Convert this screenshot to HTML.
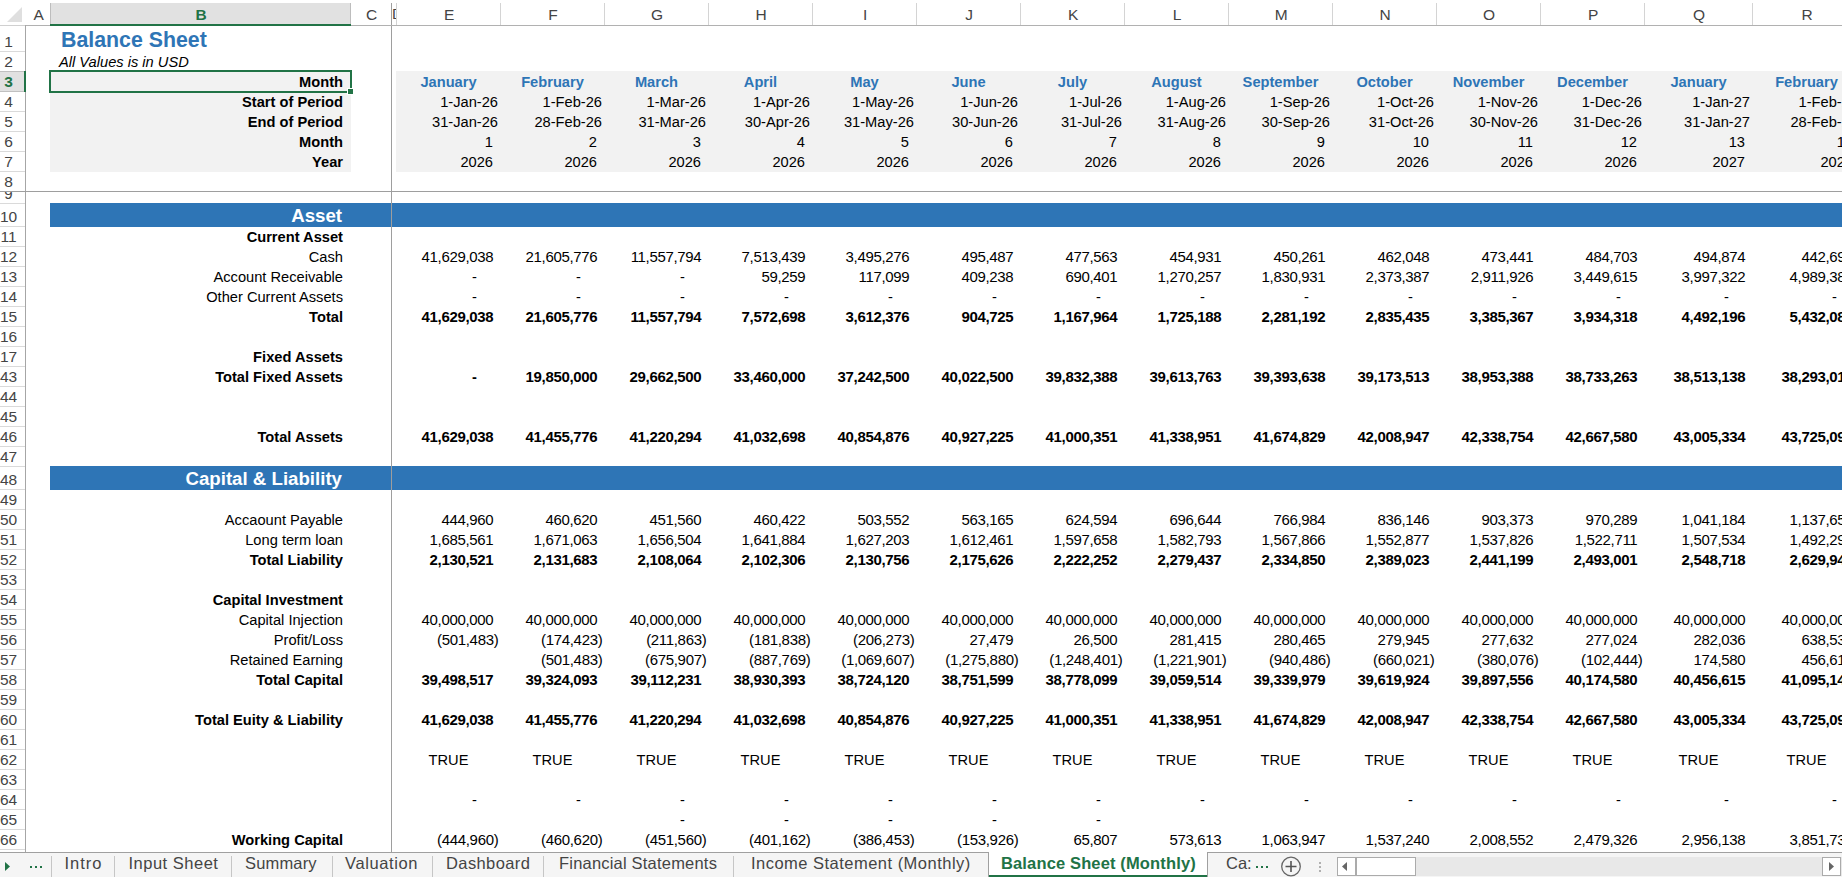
<!DOCTYPE html>
<html><head><meta charset="utf-8"><title>Balance Sheet (Monthly)</title>
<style>
html,body{margin:0;padding:0;}
body{width:1842px;height:877px;overflow:hidden;position:relative;background:#fff;font-family:"Liberation Sans",sans-serif;color:#000;}
.t{position:absolute;white-space:nowrap;line-height:40px;height:40px;}
.r{position:absolute;}
</style></head><body>
<div class="r" style="left:50px;top:71px;width:301px;height:101px;background:#f2f2f2;"></div><div class="r" style="left:396px;top:71px;width:1446px;height:101px;background:#f2f2f2;"></div><div class="r" style="left:50px;top:203px;width:1792px;height:24px;background:#2e75b6;"></div><div class="r" style="left:50px;top:466px;width:1792px;height:24px;background:#2e75b6;"></div><div class="t" style="left:61.00px;top:19.61px;width:400px;text-align:left;font-size:21.33px;font-weight:bold;color:#2e75b6;">Balance Sheet</div><div class="t" style="left:59.00px;top:41.92px;width:400px;text-align:left;font-size:14.67px;font-style:italic;">All Values is in USD</div><div class="t" style="left:-57.00px;top:61.92px;width:400px;text-align:right;font-size:14.67px;font-weight:bold;">Month</div><div class="t" style="left:-57.00px;top:81.92px;width:400px;text-align:right;font-size:14.67px;font-weight:bold;">Start of Period</div><div class="t" style="left:-57.00px;top:101.92px;width:400px;text-align:right;font-size:14.67px;font-weight:bold;">End of Period</div><div class="t" style="left:-57.00px;top:121.92px;width:400px;text-align:right;font-size:14.67px;font-weight:bold;">Month</div><div class="t" style="left:-57.00px;top:141.92px;width:400px;text-align:right;font-size:14.67px;font-weight:bold;">Year</div><div class="t" style="left:248.50px;top:61.92px;width:400px;text-align:center;font-size:14.67px;font-weight:bold;color:#2e75b6;">January</div><div class="t" style="left:98.00px;top:81.92px;width:400px;text-align:right;font-size:14.67px;">1-Jan-26</div><div class="t" style="left:98.00px;top:101.92px;width:400px;text-align:right;font-size:14.67px;">31-Jan-26</div><div class="t" style="left:93.00px;top:121.92px;width:400px;text-align:right;font-size:14.67px;">1</div><div class="t" style="left:93.00px;top:141.92px;width:400px;text-align:right;font-size:14.67px;">2026</div><div class="t" style="left:352.50px;top:61.92px;width:400px;text-align:center;font-size:14.67px;font-weight:bold;color:#2e75b6;">February</div><div class="t" style="left:202.00px;top:81.92px;width:400px;text-align:right;font-size:14.67px;">1-Feb-26</div><div class="t" style="left:202.00px;top:101.92px;width:400px;text-align:right;font-size:14.67px;">28-Feb-26</div><div class="t" style="left:197.00px;top:121.92px;width:400px;text-align:right;font-size:14.67px;">2</div><div class="t" style="left:197.00px;top:141.92px;width:400px;text-align:right;font-size:14.67px;">2026</div><div class="t" style="left:456.50px;top:61.92px;width:400px;text-align:center;font-size:14.67px;font-weight:bold;color:#2e75b6;">March</div><div class="t" style="left:306.00px;top:81.92px;width:400px;text-align:right;font-size:14.67px;">1-Mar-26</div><div class="t" style="left:306.00px;top:101.92px;width:400px;text-align:right;font-size:14.67px;">31-Mar-26</div><div class="t" style="left:301.00px;top:121.92px;width:400px;text-align:right;font-size:14.67px;">3</div><div class="t" style="left:301.00px;top:141.92px;width:400px;text-align:right;font-size:14.67px;">2026</div><div class="t" style="left:560.50px;top:61.92px;width:400px;text-align:center;font-size:14.67px;font-weight:bold;color:#2e75b6;">April</div><div class="t" style="left:410.00px;top:81.92px;width:400px;text-align:right;font-size:14.67px;">1-Apr-26</div><div class="t" style="left:410.00px;top:101.92px;width:400px;text-align:right;font-size:14.67px;">30-Apr-26</div><div class="t" style="left:405.00px;top:121.92px;width:400px;text-align:right;font-size:14.67px;">4</div><div class="t" style="left:405.00px;top:141.92px;width:400px;text-align:right;font-size:14.67px;">2026</div><div class="t" style="left:664.50px;top:61.92px;width:400px;text-align:center;font-size:14.67px;font-weight:bold;color:#2e75b6;">May</div><div class="t" style="left:514.00px;top:81.92px;width:400px;text-align:right;font-size:14.67px;">1-May-26</div><div class="t" style="left:514.00px;top:101.92px;width:400px;text-align:right;font-size:14.67px;">31-May-26</div><div class="t" style="left:509.00px;top:121.92px;width:400px;text-align:right;font-size:14.67px;">5</div><div class="t" style="left:509.00px;top:141.92px;width:400px;text-align:right;font-size:14.67px;">2026</div><div class="t" style="left:768.50px;top:61.92px;width:400px;text-align:center;font-size:14.67px;font-weight:bold;color:#2e75b6;">June</div><div class="t" style="left:618.00px;top:81.92px;width:400px;text-align:right;font-size:14.67px;">1-Jun-26</div><div class="t" style="left:618.00px;top:101.92px;width:400px;text-align:right;font-size:14.67px;">30-Jun-26</div><div class="t" style="left:613.00px;top:121.92px;width:400px;text-align:right;font-size:14.67px;">6</div><div class="t" style="left:613.00px;top:141.92px;width:400px;text-align:right;font-size:14.67px;">2026</div><div class="t" style="left:872.50px;top:61.92px;width:400px;text-align:center;font-size:14.67px;font-weight:bold;color:#2e75b6;">July</div><div class="t" style="left:722.00px;top:81.92px;width:400px;text-align:right;font-size:14.67px;">1-Jul-26</div><div class="t" style="left:722.00px;top:101.92px;width:400px;text-align:right;font-size:14.67px;">31-Jul-26</div><div class="t" style="left:717.00px;top:121.92px;width:400px;text-align:right;font-size:14.67px;">7</div><div class="t" style="left:717.00px;top:141.92px;width:400px;text-align:right;font-size:14.67px;">2026</div><div class="t" style="left:976.50px;top:61.92px;width:400px;text-align:center;font-size:14.67px;font-weight:bold;color:#2e75b6;">August</div><div class="t" style="left:826.00px;top:81.92px;width:400px;text-align:right;font-size:14.67px;">1-Aug-26</div><div class="t" style="left:826.00px;top:101.92px;width:400px;text-align:right;font-size:14.67px;">31-Aug-26</div><div class="t" style="left:821.00px;top:121.92px;width:400px;text-align:right;font-size:14.67px;">8</div><div class="t" style="left:821.00px;top:141.92px;width:400px;text-align:right;font-size:14.67px;">2026</div><div class="t" style="left:1080.50px;top:61.92px;width:400px;text-align:center;font-size:14.67px;font-weight:bold;color:#2e75b6;">September</div><div class="t" style="left:930.00px;top:81.92px;width:400px;text-align:right;font-size:14.67px;">1-Sep-26</div><div class="t" style="left:930.00px;top:101.92px;width:400px;text-align:right;font-size:14.67px;">30-Sep-26</div><div class="t" style="left:925.00px;top:121.92px;width:400px;text-align:right;font-size:14.67px;">9</div><div class="t" style="left:925.00px;top:141.92px;width:400px;text-align:right;font-size:14.67px;">2026</div><div class="t" style="left:1184.50px;top:61.92px;width:400px;text-align:center;font-size:14.67px;font-weight:bold;color:#2e75b6;">October</div><div class="t" style="left:1034.00px;top:81.92px;width:400px;text-align:right;font-size:14.67px;">1-Oct-26</div><div class="t" style="left:1034.00px;top:101.92px;width:400px;text-align:right;font-size:14.67px;">31-Oct-26</div><div class="t" style="left:1029.00px;top:121.92px;width:400px;text-align:right;font-size:14.67px;">10</div><div class="t" style="left:1029.00px;top:141.92px;width:400px;text-align:right;font-size:14.67px;">2026</div><div class="t" style="left:1288.50px;top:61.92px;width:400px;text-align:center;font-size:14.67px;font-weight:bold;color:#2e75b6;">November</div><div class="t" style="left:1138.00px;top:81.92px;width:400px;text-align:right;font-size:14.67px;">1-Nov-26</div><div class="t" style="left:1138.00px;top:101.92px;width:400px;text-align:right;font-size:14.67px;">30-Nov-26</div><div class="t" style="left:1133.00px;top:121.92px;width:400px;text-align:right;font-size:14.67px;">11</div><div class="t" style="left:1133.00px;top:141.92px;width:400px;text-align:right;font-size:14.67px;">2026</div><div class="t" style="left:1392.50px;top:61.92px;width:400px;text-align:center;font-size:14.67px;font-weight:bold;color:#2e75b6;">December</div><div class="t" style="left:1242.00px;top:81.92px;width:400px;text-align:right;font-size:14.67px;">1-Dec-26</div><div class="t" style="left:1242.00px;top:101.92px;width:400px;text-align:right;font-size:14.67px;">31-Dec-26</div><div class="t" style="left:1237.00px;top:121.92px;width:400px;text-align:right;font-size:14.67px;">12</div><div class="t" style="left:1237.00px;top:141.92px;width:400px;text-align:right;font-size:14.67px;">2026</div><div class="t" style="left:1498.50px;top:61.92px;width:400px;text-align:center;font-size:14.67px;font-weight:bold;color:#2e75b6;">January</div><div class="t" style="left:1350.00px;top:81.92px;width:400px;text-align:right;font-size:14.67px;">1-Jan-27</div><div class="t" style="left:1350.00px;top:101.92px;width:400px;text-align:right;font-size:14.67px;">31-Jan-27</div><div class="t" style="left:1345.00px;top:121.92px;width:400px;text-align:right;font-size:14.67px;">13</div><div class="t" style="left:1345.00px;top:141.92px;width:400px;text-align:right;font-size:14.67px;">2027</div><div class="t" style="left:1606.50px;top:61.92px;width:400px;text-align:center;font-size:14.67px;font-weight:bold;color:#2e75b6;">February</div><div class="t" style="left:1458.00px;top:81.92px;width:400px;text-align:right;font-size:14.67px;">1-Feb-27</div><div class="t" style="left:1458.00px;top:101.92px;width:400px;text-align:right;font-size:14.67px;">28-Feb-27</div><div class="t" style="left:1453.00px;top:121.92px;width:400px;text-align:right;font-size:14.67px;">14</div><div class="t" style="left:1453.00px;top:141.92px;width:400px;text-align:right;font-size:14.67px;">2027</div><div class="t" style="left:-58.00px;top:195.53px;width:400px;text-align:right;font-size:18.67px;font-weight:bold;color:#fff;">Asset</div><div class="t" style="left:-58.00px;top:458.53px;width:400px;text-align:right;font-size:18.67px;font-weight:bold;color:#fff;">Capital &amp; Liability</div><div class="t" style="left:-57.00px;top:216.92px;width:400px;text-align:right;font-size:14.67px;font-weight:bold;">Current Asset</div><div class="t" style="left:-57.00px;top:236.92px;width:400px;text-align:right;font-size:14.67px;">Cash</div><div class="t" style="left:-57.00px;top:256.92px;width:400px;text-align:right;font-size:14.67px;">Account Receivable</div><div class="t" style="left:-57.00px;top:276.92px;width:400px;text-align:right;font-size:14.67px;">Other Current Assets</div><div class="t" style="left:-57.00px;top:296.92px;width:400px;text-align:right;font-size:14.67px;font-weight:bold;">Total</div><div class="t" style="left:-57.00px;top:336.92px;width:400px;text-align:right;font-size:14.67px;font-weight:bold;">Fixed Assets</div><div class="t" style="left:-57.00px;top:356.92px;width:400px;text-align:right;font-size:14.67px;font-weight:bold;">Total Fixed Assets</div><div class="t" style="left:-57.00px;top:416.92px;width:400px;text-align:right;font-size:14.67px;font-weight:bold;">Total Assets</div><div class="t" style="left:-57.00px;top:499.92px;width:400px;text-align:right;font-size:14.67px;">Accaount Payable</div><div class="t" style="left:-57.00px;top:519.92px;width:400px;text-align:right;font-size:14.67px;">Long term loan</div><div class="t" style="left:-57.00px;top:539.92px;width:400px;text-align:right;font-size:14.67px;font-weight:bold;">Total Liability</div><div class="t" style="left:-57.00px;top:579.92px;width:400px;text-align:right;font-size:14.67px;font-weight:bold;">Capital Investment</div><div class="t" style="left:-57.00px;top:599.92px;width:400px;text-align:right;font-size:14.67px;">Capital Injection</div><div class="t" style="left:-57.00px;top:619.92px;width:400px;text-align:right;font-size:14.67px;">Profit/Loss</div><div class="t" style="left:-57.00px;top:639.92px;width:400px;text-align:right;font-size:14.67px;">Retained Earning</div><div class="t" style="left:-57.00px;top:659.92px;width:400px;text-align:right;font-size:14.67px;font-weight:bold;">Total Capital</div><div class="t" style="left:-57.00px;top:699.92px;width:400px;text-align:right;font-size:14.67px;font-weight:bold;">Total Euity &amp; Liability</div><div class="t" style="left:-57.00px;top:819.92px;width:400px;text-align:right;font-size:14.67px;font-weight:bold;">Working Capital</div><div class="t" style="left:93.33px;top:236.80px;width:400px;text-align:right;font-size:15px;letter-spacing:-0.33px;">41,629,038</div><div class="t" style="left:197.33px;top:236.80px;width:400px;text-align:right;font-size:15px;letter-spacing:-0.33px;">21,605,776</div><div class="t" style="left:301.33px;top:236.80px;width:400px;text-align:right;font-size:15px;letter-spacing:-0.33px;">11,557,794</div><div class="t" style="left:405.33px;top:236.80px;width:400px;text-align:right;font-size:15px;letter-spacing:-0.33px;">7,513,439</div><div class="t" style="left:509.33px;top:236.80px;width:400px;text-align:right;font-size:15px;letter-spacing:-0.33px;">3,495,276</div><div class="t" style="left:613.33px;top:236.80px;width:400px;text-align:right;font-size:15px;letter-spacing:-0.33px;">495,487</div><div class="t" style="left:717.33px;top:236.80px;width:400px;text-align:right;font-size:15px;letter-spacing:-0.33px;">477,563</div><div class="t" style="left:821.33px;top:236.80px;width:400px;text-align:right;font-size:15px;letter-spacing:-0.33px;">454,931</div><div class="t" style="left:925.33px;top:236.80px;width:400px;text-align:right;font-size:15px;letter-spacing:-0.33px;">450,261</div><div class="t" style="left:1029.33px;top:236.80px;width:400px;text-align:right;font-size:15px;letter-spacing:-0.33px;">462,048</div><div class="t" style="left:1133.33px;top:236.80px;width:400px;text-align:right;font-size:15px;letter-spacing:-0.33px;">473,441</div><div class="t" style="left:1237.33px;top:236.80px;width:400px;text-align:right;font-size:15px;letter-spacing:-0.33px;">484,703</div><div class="t" style="left:1345.33px;top:236.80px;width:400px;text-align:right;font-size:15px;letter-spacing:-0.33px;">494,874</div><div class="t" style="left:1453.33px;top:236.80px;width:400px;text-align:right;font-size:15px;letter-spacing:-0.33px;">442,693</div><div class="t" style="left:76.80px;top:257.42px;width:400px;text-align:right;font-size:14.67px;">-</div><div class="t" style="left:180.80px;top:257.42px;width:400px;text-align:right;font-size:14.67px;">-</div><div class="t" style="left:284.80px;top:257.42px;width:400px;text-align:right;font-size:14.67px;">-</div><div class="t" style="left:405.33px;top:256.80px;width:400px;text-align:right;font-size:15px;letter-spacing:-0.33px;">59,259</div><div class="t" style="left:509.33px;top:256.80px;width:400px;text-align:right;font-size:15px;letter-spacing:-0.33px;">117,099</div><div class="t" style="left:613.33px;top:256.80px;width:400px;text-align:right;font-size:15px;letter-spacing:-0.33px;">409,238</div><div class="t" style="left:717.33px;top:256.80px;width:400px;text-align:right;font-size:15px;letter-spacing:-0.33px;">690,401</div><div class="t" style="left:821.33px;top:256.80px;width:400px;text-align:right;font-size:15px;letter-spacing:-0.33px;">1,270,257</div><div class="t" style="left:925.33px;top:256.80px;width:400px;text-align:right;font-size:15px;letter-spacing:-0.33px;">1,830,931</div><div class="t" style="left:1029.33px;top:256.80px;width:400px;text-align:right;font-size:15px;letter-spacing:-0.33px;">2,373,387</div><div class="t" style="left:1133.33px;top:256.80px;width:400px;text-align:right;font-size:15px;letter-spacing:-0.33px;">2,911,926</div><div class="t" style="left:1237.33px;top:256.80px;width:400px;text-align:right;font-size:15px;letter-spacing:-0.33px;">3,449,615</div><div class="t" style="left:1345.33px;top:256.80px;width:400px;text-align:right;font-size:15px;letter-spacing:-0.33px;">3,997,322</div><div class="t" style="left:1453.33px;top:256.80px;width:400px;text-align:right;font-size:15px;letter-spacing:-0.33px;">4,989,389</div><div class="t" style="left:76.80px;top:277.42px;width:400px;text-align:right;font-size:14.67px;">-</div><div class="t" style="left:180.80px;top:277.42px;width:400px;text-align:right;font-size:14.67px;">-</div><div class="t" style="left:284.80px;top:277.42px;width:400px;text-align:right;font-size:14.67px;">-</div><div class="t" style="left:388.80px;top:277.42px;width:400px;text-align:right;font-size:14.67px;">-</div><div class="t" style="left:492.80px;top:277.42px;width:400px;text-align:right;font-size:14.67px;">-</div><div class="t" style="left:596.80px;top:277.42px;width:400px;text-align:right;font-size:14.67px;">-</div><div class="t" style="left:700.80px;top:277.42px;width:400px;text-align:right;font-size:14.67px;">-</div><div class="t" style="left:804.80px;top:277.42px;width:400px;text-align:right;font-size:14.67px;">-</div><div class="t" style="left:908.80px;top:277.42px;width:400px;text-align:right;font-size:14.67px;">-</div><div class="t" style="left:1012.80px;top:277.42px;width:400px;text-align:right;font-size:14.67px;">-</div><div class="t" style="left:1116.80px;top:277.42px;width:400px;text-align:right;font-size:14.67px;">-</div><div class="t" style="left:1220.80px;top:277.42px;width:400px;text-align:right;font-size:14.67px;">-</div><div class="t" style="left:1328.80px;top:277.42px;width:400px;text-align:right;font-size:14.67px;">-</div><div class="t" style="left:1436.80px;top:277.42px;width:400px;text-align:right;font-size:14.67px;">-</div><div class="t" style="left:93.33px;top:296.80px;width:400px;text-align:right;font-size:15px;font-weight:bold;letter-spacing:-0.33px;">41,629,038</div><div class="t" style="left:197.33px;top:296.80px;width:400px;text-align:right;font-size:15px;font-weight:bold;letter-spacing:-0.33px;">21,605,776</div><div class="t" style="left:301.33px;top:296.80px;width:400px;text-align:right;font-size:15px;font-weight:bold;letter-spacing:-0.33px;">11,557,794</div><div class="t" style="left:405.33px;top:296.80px;width:400px;text-align:right;font-size:15px;font-weight:bold;letter-spacing:-0.33px;">7,572,698</div><div class="t" style="left:509.33px;top:296.80px;width:400px;text-align:right;font-size:15px;font-weight:bold;letter-spacing:-0.33px;">3,612,376</div><div class="t" style="left:613.33px;top:296.80px;width:400px;text-align:right;font-size:15px;font-weight:bold;letter-spacing:-0.33px;">904,725</div><div class="t" style="left:717.33px;top:296.80px;width:400px;text-align:right;font-size:15px;font-weight:bold;letter-spacing:-0.33px;">1,167,964</div><div class="t" style="left:821.33px;top:296.80px;width:400px;text-align:right;font-size:15px;font-weight:bold;letter-spacing:-0.33px;">1,725,188</div><div class="t" style="left:925.33px;top:296.80px;width:400px;text-align:right;font-size:15px;font-weight:bold;letter-spacing:-0.33px;">2,281,192</div><div class="t" style="left:1029.33px;top:296.80px;width:400px;text-align:right;font-size:15px;font-weight:bold;letter-spacing:-0.33px;">2,835,435</div><div class="t" style="left:1133.33px;top:296.80px;width:400px;text-align:right;font-size:15px;font-weight:bold;letter-spacing:-0.33px;">3,385,367</div><div class="t" style="left:1237.33px;top:296.80px;width:400px;text-align:right;font-size:15px;font-weight:bold;letter-spacing:-0.33px;">3,934,318</div><div class="t" style="left:1345.33px;top:296.80px;width:400px;text-align:right;font-size:15px;font-weight:bold;letter-spacing:-0.33px;">4,492,196</div><div class="t" style="left:1453.33px;top:296.80px;width:400px;text-align:right;font-size:15px;font-weight:bold;letter-spacing:-0.33px;">5,432,082</div><div class="t" style="left:76.80px;top:357.42px;width:400px;text-align:right;font-size:14.67px;font-weight:bold;">-</div><div class="t" style="left:197.33px;top:356.80px;width:400px;text-align:right;font-size:15px;font-weight:bold;letter-spacing:-0.33px;">19,850,000</div><div class="t" style="left:301.33px;top:356.80px;width:400px;text-align:right;font-size:15px;font-weight:bold;letter-spacing:-0.33px;">29,662,500</div><div class="t" style="left:405.33px;top:356.80px;width:400px;text-align:right;font-size:15px;font-weight:bold;letter-spacing:-0.33px;">33,460,000</div><div class="t" style="left:509.33px;top:356.80px;width:400px;text-align:right;font-size:15px;font-weight:bold;letter-spacing:-0.33px;">37,242,500</div><div class="t" style="left:613.33px;top:356.80px;width:400px;text-align:right;font-size:15px;font-weight:bold;letter-spacing:-0.33px;">40,022,500</div><div class="t" style="left:717.33px;top:356.80px;width:400px;text-align:right;font-size:15px;font-weight:bold;letter-spacing:-0.33px;">39,832,388</div><div class="t" style="left:821.33px;top:356.80px;width:400px;text-align:right;font-size:15px;font-weight:bold;letter-spacing:-0.33px;">39,613,763</div><div class="t" style="left:925.33px;top:356.80px;width:400px;text-align:right;font-size:15px;font-weight:bold;letter-spacing:-0.33px;">39,393,638</div><div class="t" style="left:1029.33px;top:356.80px;width:400px;text-align:right;font-size:15px;font-weight:bold;letter-spacing:-0.33px;">39,173,513</div><div class="t" style="left:1133.33px;top:356.80px;width:400px;text-align:right;font-size:15px;font-weight:bold;letter-spacing:-0.33px;">38,953,388</div><div class="t" style="left:1237.33px;top:356.80px;width:400px;text-align:right;font-size:15px;font-weight:bold;letter-spacing:-0.33px;">38,733,263</div><div class="t" style="left:1345.33px;top:356.80px;width:400px;text-align:right;font-size:15px;font-weight:bold;letter-spacing:-0.33px;">38,513,138</div><div class="t" style="left:1453.33px;top:356.80px;width:400px;text-align:right;font-size:15px;font-weight:bold;letter-spacing:-0.33px;">38,293,013</div><div class="t" style="left:93.33px;top:416.80px;width:400px;text-align:right;font-size:15px;font-weight:bold;letter-spacing:-0.33px;">41,629,038</div><div class="t" style="left:197.33px;top:416.80px;width:400px;text-align:right;font-size:15px;font-weight:bold;letter-spacing:-0.33px;">41,455,776</div><div class="t" style="left:301.33px;top:416.80px;width:400px;text-align:right;font-size:15px;font-weight:bold;letter-spacing:-0.33px;">41,220,294</div><div class="t" style="left:405.33px;top:416.80px;width:400px;text-align:right;font-size:15px;font-weight:bold;letter-spacing:-0.33px;">41,032,698</div><div class="t" style="left:509.33px;top:416.80px;width:400px;text-align:right;font-size:15px;font-weight:bold;letter-spacing:-0.33px;">40,854,876</div><div class="t" style="left:613.33px;top:416.80px;width:400px;text-align:right;font-size:15px;font-weight:bold;letter-spacing:-0.33px;">40,927,225</div><div class="t" style="left:717.33px;top:416.80px;width:400px;text-align:right;font-size:15px;font-weight:bold;letter-spacing:-0.33px;">41,000,351</div><div class="t" style="left:821.33px;top:416.80px;width:400px;text-align:right;font-size:15px;font-weight:bold;letter-spacing:-0.33px;">41,338,951</div><div class="t" style="left:925.33px;top:416.80px;width:400px;text-align:right;font-size:15px;font-weight:bold;letter-spacing:-0.33px;">41,674,829</div><div class="t" style="left:1029.33px;top:416.80px;width:400px;text-align:right;font-size:15px;font-weight:bold;letter-spacing:-0.33px;">42,008,947</div><div class="t" style="left:1133.33px;top:416.80px;width:400px;text-align:right;font-size:15px;font-weight:bold;letter-spacing:-0.33px;">42,338,754</div><div class="t" style="left:1237.33px;top:416.80px;width:400px;text-align:right;font-size:15px;font-weight:bold;letter-spacing:-0.33px;">42,667,580</div><div class="t" style="left:1345.33px;top:416.80px;width:400px;text-align:right;font-size:15px;font-weight:bold;letter-spacing:-0.33px;">43,005,334</div><div class="t" style="left:1453.33px;top:416.80px;width:400px;text-align:right;font-size:15px;font-weight:bold;letter-spacing:-0.33px;">43,725,095</div><div class="t" style="left:93.33px;top:499.80px;width:400px;text-align:right;font-size:15px;letter-spacing:-0.33px;">444,960</div><div class="t" style="left:197.33px;top:499.80px;width:400px;text-align:right;font-size:15px;letter-spacing:-0.33px;">460,620</div><div class="t" style="left:301.33px;top:499.80px;width:400px;text-align:right;font-size:15px;letter-spacing:-0.33px;">451,560</div><div class="t" style="left:405.33px;top:499.80px;width:400px;text-align:right;font-size:15px;letter-spacing:-0.33px;">460,422</div><div class="t" style="left:509.33px;top:499.80px;width:400px;text-align:right;font-size:15px;letter-spacing:-0.33px;">503,552</div><div class="t" style="left:613.33px;top:499.80px;width:400px;text-align:right;font-size:15px;letter-spacing:-0.33px;">563,165</div><div class="t" style="left:717.33px;top:499.80px;width:400px;text-align:right;font-size:15px;letter-spacing:-0.33px;">624,594</div><div class="t" style="left:821.33px;top:499.80px;width:400px;text-align:right;font-size:15px;letter-spacing:-0.33px;">696,644</div><div class="t" style="left:925.33px;top:499.80px;width:400px;text-align:right;font-size:15px;letter-spacing:-0.33px;">766,984</div><div class="t" style="left:1029.33px;top:499.80px;width:400px;text-align:right;font-size:15px;letter-spacing:-0.33px;">836,146</div><div class="t" style="left:1133.33px;top:499.80px;width:400px;text-align:right;font-size:15px;letter-spacing:-0.33px;">903,373</div><div class="t" style="left:1237.33px;top:499.80px;width:400px;text-align:right;font-size:15px;letter-spacing:-0.33px;">970,289</div><div class="t" style="left:1345.33px;top:499.80px;width:400px;text-align:right;font-size:15px;letter-spacing:-0.33px;">1,041,184</div><div class="t" style="left:1453.33px;top:499.80px;width:400px;text-align:right;font-size:15px;letter-spacing:-0.33px;">1,137,658</div><div class="t" style="left:93.33px;top:519.80px;width:400px;text-align:right;font-size:15px;letter-spacing:-0.33px;">1,685,561</div><div class="t" style="left:197.33px;top:519.80px;width:400px;text-align:right;font-size:15px;letter-spacing:-0.33px;">1,671,063</div><div class="t" style="left:301.33px;top:519.80px;width:400px;text-align:right;font-size:15px;letter-spacing:-0.33px;">1,656,504</div><div class="t" style="left:405.33px;top:519.80px;width:400px;text-align:right;font-size:15px;letter-spacing:-0.33px;">1,641,884</div><div class="t" style="left:509.33px;top:519.80px;width:400px;text-align:right;font-size:15px;letter-spacing:-0.33px;">1,627,203</div><div class="t" style="left:613.33px;top:519.80px;width:400px;text-align:right;font-size:15px;letter-spacing:-0.33px;">1,612,461</div><div class="t" style="left:717.33px;top:519.80px;width:400px;text-align:right;font-size:15px;letter-spacing:-0.33px;">1,597,658</div><div class="t" style="left:821.33px;top:519.80px;width:400px;text-align:right;font-size:15px;letter-spacing:-0.33px;">1,582,793</div><div class="t" style="left:925.33px;top:519.80px;width:400px;text-align:right;font-size:15px;letter-spacing:-0.33px;">1,567,866</div><div class="t" style="left:1029.33px;top:519.80px;width:400px;text-align:right;font-size:15px;letter-spacing:-0.33px;">1,552,877</div><div class="t" style="left:1133.33px;top:519.80px;width:400px;text-align:right;font-size:15px;letter-spacing:-0.33px;">1,537,826</div><div class="t" style="left:1237.33px;top:519.80px;width:400px;text-align:right;font-size:15px;letter-spacing:-0.33px;">1,522,711</div><div class="t" style="left:1345.33px;top:519.80px;width:400px;text-align:right;font-size:15px;letter-spacing:-0.33px;">1,507,534</div><div class="t" style="left:1453.33px;top:519.80px;width:400px;text-align:right;font-size:15px;letter-spacing:-0.33px;">1,492,293</div><div class="t" style="left:93.33px;top:539.80px;width:400px;text-align:right;font-size:15px;font-weight:bold;letter-spacing:-0.33px;">2,130,521</div><div class="t" style="left:197.33px;top:539.80px;width:400px;text-align:right;font-size:15px;font-weight:bold;letter-spacing:-0.33px;">2,131,683</div><div class="t" style="left:301.33px;top:539.80px;width:400px;text-align:right;font-size:15px;font-weight:bold;letter-spacing:-0.33px;">2,108,064</div><div class="t" style="left:405.33px;top:539.80px;width:400px;text-align:right;font-size:15px;font-weight:bold;letter-spacing:-0.33px;">2,102,306</div><div class="t" style="left:509.33px;top:539.80px;width:400px;text-align:right;font-size:15px;font-weight:bold;letter-spacing:-0.33px;">2,130,756</div><div class="t" style="left:613.33px;top:539.80px;width:400px;text-align:right;font-size:15px;font-weight:bold;letter-spacing:-0.33px;">2,175,626</div><div class="t" style="left:717.33px;top:539.80px;width:400px;text-align:right;font-size:15px;font-weight:bold;letter-spacing:-0.33px;">2,222,252</div><div class="t" style="left:821.33px;top:539.80px;width:400px;text-align:right;font-size:15px;font-weight:bold;letter-spacing:-0.33px;">2,279,437</div><div class="t" style="left:925.33px;top:539.80px;width:400px;text-align:right;font-size:15px;font-weight:bold;letter-spacing:-0.33px;">2,334,850</div><div class="t" style="left:1029.33px;top:539.80px;width:400px;text-align:right;font-size:15px;font-weight:bold;letter-spacing:-0.33px;">2,389,023</div><div class="t" style="left:1133.33px;top:539.80px;width:400px;text-align:right;font-size:15px;font-weight:bold;letter-spacing:-0.33px;">2,441,199</div><div class="t" style="left:1237.33px;top:539.80px;width:400px;text-align:right;font-size:15px;font-weight:bold;letter-spacing:-0.33px;">2,493,001</div><div class="t" style="left:1345.33px;top:539.80px;width:400px;text-align:right;font-size:15px;font-weight:bold;letter-spacing:-0.33px;">2,548,718</div><div class="t" style="left:1453.33px;top:539.80px;width:400px;text-align:right;font-size:15px;font-weight:bold;letter-spacing:-0.33px;">2,629,948</div><div class="t" style="left:93.33px;top:599.80px;width:400px;text-align:right;font-size:15px;letter-spacing:-0.33px;">40,000,000</div><div class="t" style="left:197.33px;top:599.80px;width:400px;text-align:right;font-size:15px;letter-spacing:-0.33px;">40,000,000</div><div class="t" style="left:301.33px;top:599.80px;width:400px;text-align:right;font-size:15px;letter-spacing:-0.33px;">40,000,000</div><div class="t" style="left:405.33px;top:599.80px;width:400px;text-align:right;font-size:15px;letter-spacing:-0.33px;">40,000,000</div><div class="t" style="left:509.33px;top:599.80px;width:400px;text-align:right;font-size:15px;letter-spacing:-0.33px;">40,000,000</div><div class="t" style="left:613.33px;top:599.80px;width:400px;text-align:right;font-size:15px;letter-spacing:-0.33px;">40,000,000</div><div class="t" style="left:717.33px;top:599.80px;width:400px;text-align:right;font-size:15px;letter-spacing:-0.33px;">40,000,000</div><div class="t" style="left:821.33px;top:599.80px;width:400px;text-align:right;font-size:15px;letter-spacing:-0.33px;">40,000,000</div><div class="t" style="left:925.33px;top:599.80px;width:400px;text-align:right;font-size:15px;letter-spacing:-0.33px;">40,000,000</div><div class="t" style="left:1029.33px;top:599.80px;width:400px;text-align:right;font-size:15px;letter-spacing:-0.33px;">40,000,000</div><div class="t" style="left:1133.33px;top:599.80px;width:400px;text-align:right;font-size:15px;letter-spacing:-0.33px;">40,000,000</div><div class="t" style="left:1237.33px;top:599.80px;width:400px;text-align:right;font-size:15px;letter-spacing:-0.33px;">40,000,000</div><div class="t" style="left:1345.33px;top:599.80px;width:400px;text-align:right;font-size:15px;letter-spacing:-0.33px;">40,000,000</div><div class="t" style="left:1453.33px;top:599.80px;width:400px;text-align:right;font-size:15px;letter-spacing:-0.33px;">40,000,000</div><div class="t" style="left:98.33px;top:619.80px;width:400px;text-align:right;font-size:15px;letter-spacing:-0.33px;">(501,483)</div><div class="t" style="left:202.33px;top:619.80px;width:400px;text-align:right;font-size:15px;letter-spacing:-0.33px;">(174,423)</div><div class="t" style="left:306.33px;top:619.80px;width:400px;text-align:right;font-size:15px;letter-spacing:-0.33px;">(211,863)</div><div class="t" style="left:410.33px;top:619.80px;width:400px;text-align:right;font-size:15px;letter-spacing:-0.33px;">(181,838)</div><div class="t" style="left:514.33px;top:619.80px;width:400px;text-align:right;font-size:15px;letter-spacing:-0.33px;">(206,273)</div><div class="t" style="left:613.33px;top:619.80px;width:400px;text-align:right;font-size:15px;letter-spacing:-0.33px;">27,479</div><div class="t" style="left:717.33px;top:619.80px;width:400px;text-align:right;font-size:15px;letter-spacing:-0.33px;">26,500</div><div class="t" style="left:821.33px;top:619.80px;width:400px;text-align:right;font-size:15px;letter-spacing:-0.33px;">281,415</div><div class="t" style="left:925.33px;top:619.80px;width:400px;text-align:right;font-size:15px;letter-spacing:-0.33px;">280,465</div><div class="t" style="left:1029.33px;top:619.80px;width:400px;text-align:right;font-size:15px;letter-spacing:-0.33px;">279,945</div><div class="t" style="left:1133.33px;top:619.80px;width:400px;text-align:right;font-size:15px;letter-spacing:-0.33px;">277,632</div><div class="t" style="left:1237.33px;top:619.80px;width:400px;text-align:right;font-size:15px;letter-spacing:-0.33px;">277,024</div><div class="t" style="left:1345.33px;top:619.80px;width:400px;text-align:right;font-size:15px;letter-spacing:-0.33px;">282,036</div><div class="t" style="left:1453.33px;top:619.80px;width:400px;text-align:right;font-size:15px;letter-spacing:-0.33px;">638,535</div><div class="t" style="left:202.33px;top:639.80px;width:400px;text-align:right;font-size:15px;letter-spacing:-0.33px;">(501,483)</div><div class="t" style="left:306.33px;top:639.80px;width:400px;text-align:right;font-size:15px;letter-spacing:-0.33px;">(675,907)</div><div class="t" style="left:410.33px;top:639.80px;width:400px;text-align:right;font-size:15px;letter-spacing:-0.33px;">(887,769)</div><div class="t" style="left:514.33px;top:639.80px;width:400px;text-align:right;font-size:15px;letter-spacing:-0.33px;">(1,069,607)</div><div class="t" style="left:618.33px;top:639.80px;width:400px;text-align:right;font-size:15px;letter-spacing:-0.33px;">(1,275,880)</div><div class="t" style="left:722.33px;top:639.80px;width:400px;text-align:right;font-size:15px;letter-spacing:-0.33px;">(1,248,401)</div><div class="t" style="left:826.33px;top:639.80px;width:400px;text-align:right;font-size:15px;letter-spacing:-0.33px;">(1,221,901)</div><div class="t" style="left:930.33px;top:639.80px;width:400px;text-align:right;font-size:15px;letter-spacing:-0.33px;">(940,486)</div><div class="t" style="left:1034.33px;top:639.80px;width:400px;text-align:right;font-size:15px;letter-spacing:-0.33px;">(660,021)</div><div class="t" style="left:1138.33px;top:639.80px;width:400px;text-align:right;font-size:15px;letter-spacing:-0.33px;">(380,076)</div><div class="t" style="left:1242.33px;top:639.80px;width:400px;text-align:right;font-size:15px;letter-spacing:-0.33px;">(102,444)</div><div class="t" style="left:1345.33px;top:639.80px;width:400px;text-align:right;font-size:15px;letter-spacing:-0.33px;">174,580</div><div class="t" style="left:1453.33px;top:639.80px;width:400px;text-align:right;font-size:15px;letter-spacing:-0.33px;">456,612</div><div class="t" style="left:93.33px;top:659.80px;width:400px;text-align:right;font-size:15px;font-weight:bold;letter-spacing:-0.33px;">39,498,517</div><div class="t" style="left:197.33px;top:659.80px;width:400px;text-align:right;font-size:15px;font-weight:bold;letter-spacing:-0.33px;">39,324,093</div><div class="t" style="left:301.33px;top:659.80px;width:400px;text-align:right;font-size:15px;font-weight:bold;letter-spacing:-0.33px;">39,112,231</div><div class="t" style="left:405.33px;top:659.80px;width:400px;text-align:right;font-size:15px;font-weight:bold;letter-spacing:-0.33px;">38,930,393</div><div class="t" style="left:509.33px;top:659.80px;width:400px;text-align:right;font-size:15px;font-weight:bold;letter-spacing:-0.33px;">38,724,120</div><div class="t" style="left:613.33px;top:659.80px;width:400px;text-align:right;font-size:15px;font-weight:bold;letter-spacing:-0.33px;">38,751,599</div><div class="t" style="left:717.33px;top:659.80px;width:400px;text-align:right;font-size:15px;font-weight:bold;letter-spacing:-0.33px;">38,778,099</div><div class="t" style="left:821.33px;top:659.80px;width:400px;text-align:right;font-size:15px;font-weight:bold;letter-spacing:-0.33px;">39,059,514</div><div class="t" style="left:925.33px;top:659.80px;width:400px;text-align:right;font-size:15px;font-weight:bold;letter-spacing:-0.33px;">39,339,979</div><div class="t" style="left:1029.33px;top:659.80px;width:400px;text-align:right;font-size:15px;font-weight:bold;letter-spacing:-0.33px;">39,619,924</div><div class="t" style="left:1133.33px;top:659.80px;width:400px;text-align:right;font-size:15px;font-weight:bold;letter-spacing:-0.33px;">39,897,556</div><div class="t" style="left:1237.33px;top:659.80px;width:400px;text-align:right;font-size:15px;font-weight:bold;letter-spacing:-0.33px;">40,174,580</div><div class="t" style="left:1345.33px;top:659.80px;width:400px;text-align:right;font-size:15px;font-weight:bold;letter-spacing:-0.33px;">40,456,615</div><div class="t" style="left:1453.33px;top:659.80px;width:400px;text-align:right;font-size:15px;font-weight:bold;letter-spacing:-0.33px;">41,095,147</div><div class="t" style="left:93.33px;top:699.80px;width:400px;text-align:right;font-size:15px;font-weight:bold;letter-spacing:-0.33px;">41,629,038</div><div class="t" style="left:197.33px;top:699.80px;width:400px;text-align:right;font-size:15px;font-weight:bold;letter-spacing:-0.33px;">41,455,776</div><div class="t" style="left:301.33px;top:699.80px;width:400px;text-align:right;font-size:15px;font-weight:bold;letter-spacing:-0.33px;">41,220,294</div><div class="t" style="left:405.33px;top:699.80px;width:400px;text-align:right;font-size:15px;font-weight:bold;letter-spacing:-0.33px;">41,032,698</div><div class="t" style="left:509.33px;top:699.80px;width:400px;text-align:right;font-size:15px;font-weight:bold;letter-spacing:-0.33px;">40,854,876</div><div class="t" style="left:613.33px;top:699.80px;width:400px;text-align:right;font-size:15px;font-weight:bold;letter-spacing:-0.33px;">40,927,225</div><div class="t" style="left:717.33px;top:699.80px;width:400px;text-align:right;font-size:15px;font-weight:bold;letter-spacing:-0.33px;">41,000,351</div><div class="t" style="left:821.33px;top:699.80px;width:400px;text-align:right;font-size:15px;font-weight:bold;letter-spacing:-0.33px;">41,338,951</div><div class="t" style="left:925.33px;top:699.80px;width:400px;text-align:right;font-size:15px;font-weight:bold;letter-spacing:-0.33px;">41,674,829</div><div class="t" style="left:1029.33px;top:699.80px;width:400px;text-align:right;font-size:15px;font-weight:bold;letter-spacing:-0.33px;">42,008,947</div><div class="t" style="left:1133.33px;top:699.80px;width:400px;text-align:right;font-size:15px;font-weight:bold;letter-spacing:-0.33px;">42,338,754</div><div class="t" style="left:1237.33px;top:699.80px;width:400px;text-align:right;font-size:15px;font-weight:bold;letter-spacing:-0.33px;">42,667,580</div><div class="t" style="left:1345.33px;top:699.80px;width:400px;text-align:right;font-size:15px;font-weight:bold;letter-spacing:-0.33px;">43,005,334</div><div class="t" style="left:1453.33px;top:699.80px;width:400px;text-align:right;font-size:15px;font-weight:bold;letter-spacing:-0.33px;">43,725,095</div><div class="t" style="left:248.50px;top:739.92px;width:400px;text-align:center;font-size:14.67px;">TRUE</div><div class="t" style="left:352.50px;top:739.92px;width:400px;text-align:center;font-size:14.67px;">TRUE</div><div class="t" style="left:456.50px;top:739.92px;width:400px;text-align:center;font-size:14.67px;">TRUE</div><div class="t" style="left:560.50px;top:739.92px;width:400px;text-align:center;font-size:14.67px;">TRUE</div><div class="t" style="left:664.50px;top:739.92px;width:400px;text-align:center;font-size:14.67px;">TRUE</div><div class="t" style="left:768.50px;top:739.92px;width:400px;text-align:center;font-size:14.67px;">TRUE</div><div class="t" style="left:872.50px;top:739.92px;width:400px;text-align:center;font-size:14.67px;">TRUE</div><div class="t" style="left:976.50px;top:739.92px;width:400px;text-align:center;font-size:14.67px;">TRUE</div><div class="t" style="left:1080.50px;top:739.92px;width:400px;text-align:center;font-size:14.67px;">TRUE</div><div class="t" style="left:1184.50px;top:739.92px;width:400px;text-align:center;font-size:14.67px;">TRUE</div><div class="t" style="left:1288.50px;top:739.92px;width:400px;text-align:center;font-size:14.67px;">TRUE</div><div class="t" style="left:1392.50px;top:739.92px;width:400px;text-align:center;font-size:14.67px;">TRUE</div><div class="t" style="left:1498.50px;top:739.92px;width:400px;text-align:center;font-size:14.67px;">TRUE</div><div class="t" style="left:1606.50px;top:739.92px;width:400px;text-align:center;font-size:14.67px;">TRUE</div><div class="t" style="left:76.80px;top:780.42px;width:400px;text-align:right;font-size:14.67px;">-</div><div class="t" style="left:180.80px;top:780.42px;width:400px;text-align:right;font-size:14.67px;">-</div><div class="t" style="left:284.80px;top:780.42px;width:400px;text-align:right;font-size:14.67px;">-</div><div class="t" style="left:388.80px;top:780.42px;width:400px;text-align:right;font-size:14.67px;">-</div><div class="t" style="left:492.80px;top:780.42px;width:400px;text-align:right;font-size:14.67px;">-</div><div class="t" style="left:596.80px;top:780.42px;width:400px;text-align:right;font-size:14.67px;">-</div><div class="t" style="left:700.80px;top:780.42px;width:400px;text-align:right;font-size:14.67px;">-</div><div class="t" style="left:804.80px;top:780.42px;width:400px;text-align:right;font-size:14.67px;">-</div><div class="t" style="left:908.80px;top:780.42px;width:400px;text-align:right;font-size:14.67px;">-</div><div class="t" style="left:1012.80px;top:780.42px;width:400px;text-align:right;font-size:14.67px;">-</div><div class="t" style="left:1116.80px;top:780.42px;width:400px;text-align:right;font-size:14.67px;">-</div><div class="t" style="left:1220.80px;top:780.42px;width:400px;text-align:right;font-size:14.67px;">-</div><div class="t" style="left:1328.80px;top:780.42px;width:400px;text-align:right;font-size:14.67px;">-</div><div class="t" style="left:1436.80px;top:780.42px;width:400px;text-align:right;font-size:14.67px;">-</div><div class="t" style="left:284.80px;top:800.42px;width:400px;text-align:right;font-size:14.67px;">-</div><div class="t" style="left:388.80px;top:800.42px;width:400px;text-align:right;font-size:14.67px;">-</div><div class="t" style="left:492.80px;top:800.42px;width:400px;text-align:right;font-size:14.67px;">-</div><div class="t" style="left:596.80px;top:800.42px;width:400px;text-align:right;font-size:14.67px;">-</div><div class="t" style="left:700.80px;top:800.42px;width:400px;text-align:right;font-size:14.67px;">-</div><div class="t" style="left:98.33px;top:819.80px;width:400px;text-align:right;font-size:15px;letter-spacing:-0.33px;">(444,960)</div><div class="t" style="left:202.33px;top:819.80px;width:400px;text-align:right;font-size:15px;letter-spacing:-0.33px;">(460,620)</div><div class="t" style="left:306.33px;top:819.80px;width:400px;text-align:right;font-size:15px;letter-spacing:-0.33px;">(451,560)</div><div class="t" style="left:410.33px;top:819.80px;width:400px;text-align:right;font-size:15px;letter-spacing:-0.33px;">(401,162)</div><div class="t" style="left:514.33px;top:819.80px;width:400px;text-align:right;font-size:15px;letter-spacing:-0.33px;">(386,453)</div><div class="t" style="left:618.33px;top:819.80px;width:400px;text-align:right;font-size:15px;letter-spacing:-0.33px;">(153,926)</div><div class="t" style="left:717.33px;top:819.80px;width:400px;text-align:right;font-size:15px;letter-spacing:-0.33px;">65,807</div><div class="t" style="left:821.33px;top:819.80px;width:400px;text-align:right;font-size:15px;letter-spacing:-0.33px;">573,613</div><div class="t" style="left:925.33px;top:819.80px;width:400px;text-align:right;font-size:15px;letter-spacing:-0.33px;">1,063,947</div><div class="t" style="left:1029.33px;top:819.80px;width:400px;text-align:right;font-size:15px;letter-spacing:-0.33px;">1,537,240</div><div class="t" style="left:1133.33px;top:819.80px;width:400px;text-align:right;font-size:15px;letter-spacing:-0.33px;">2,008,552</div><div class="t" style="left:1237.33px;top:819.80px;width:400px;text-align:right;font-size:15px;letter-spacing:-0.33px;">2,479,326</div><div class="t" style="left:1345.33px;top:819.80px;width:400px;text-align:right;font-size:15px;letter-spacing:-0.33px;">2,956,138</div><div class="t" style="left:1453.33px;top:819.80px;width:400px;text-align:right;font-size:15px;letter-spacing:-0.33px;">3,851,733</div><div class="r" style="left:49px;top:70px;width:299px;height:19px;border:2px solid #217346;"></div><div class="r" style="left:347px;top:88px;width:5px;height:5px;background:#217346;border:1px solid #fff;"></div><div class="r" style="left:391px;top:25px;width:1px;height:827px;background:#9e9e9e;"></div><div class="r" style="left:25px;top:191px;width:1817px;height:1px;background:#9e9e9e;"></div><div class="r" style="left:0px;top:0px;width:1842px;height:25px;background:#fff;"></div><div class="r" style="left:51px;top:3px;width:299px;height:21px;background:#e1e1e1;"></div><div class="r" style="left:50px;top:3px;width:1px;height:22px;background:#d4d4d4;"></div><div class="r" style="left:350px;top:3px;width:1px;height:22px;background:#d4d4d4;"></div><div class="r" style="left:391px;top:3px;width:1px;height:22px;background:#9e9e9e;"></div><div class="r" style="left:396px;top:3px;width:1px;height:22px;background:#d4d4d4;"></div><div class="r" style="left:500px;top:3px;width:1px;height:22px;background:#d4d4d4;"></div><div class="r" style="left:604px;top:3px;width:1px;height:22px;background:#d4d4d4;"></div><div class="r" style="left:708px;top:3px;width:1px;height:22px;background:#d4d4d4;"></div><div class="r" style="left:812px;top:3px;width:1px;height:22px;background:#d4d4d4;"></div><div class="r" style="left:916px;top:3px;width:1px;height:22px;background:#d4d4d4;"></div><div class="r" style="left:1020px;top:3px;width:1px;height:22px;background:#d4d4d4;"></div><div class="r" style="left:1124px;top:3px;width:1px;height:22px;background:#d4d4d4;"></div><div class="r" style="left:1228px;top:3px;width:1px;height:22px;background:#d4d4d4;"></div><div class="r" style="left:1332px;top:3px;width:1px;height:22px;background:#d4d4d4;"></div><div class="r" style="left:1436px;top:3px;width:1px;height:22px;background:#d4d4d4;"></div><div class="r" style="left:1540px;top:3px;width:1px;height:22px;background:#d4d4d4;"></div><div class="r" style="left:1644px;top:3px;width:1px;height:22px;background:#d4d4d4;"></div><div class="r" style="left:1752px;top:3px;width:1px;height:22px;background:#d4d4d4;"></div><div class="r" style="left:1860px;top:3px;width:1px;height:22px;background:#d4d4d4;"></div><div class="t" style="left:-161.40px;top:-5.37px;width:400px;text-align:center;font-size:15.5px;color:#444;">A</div><div class="t" style="left:1.10px;top:-5.37px;width:400px;text-align:center;font-size:15.5px;font-weight:bold;color:#217346;">B</div><div class="t" style="left:171.60px;top:-5.37px;width:400px;text-align:center;font-size:15.5px;color:#444;">C</div><div class="t hd" style="left:392px;top:3px;width:4px;height:22px;overflow:hidden;line-height:22px;font-size:15px;color:#444">D</div><div class="t" style="left:249.10px;top:-5.37px;width:400px;text-align:center;font-size:15.5px;color:#444;">E</div><div class="t" style="left:353.10px;top:-5.37px;width:400px;text-align:center;font-size:15.5px;color:#444;">F</div><div class="t" style="left:457.10px;top:-5.37px;width:400px;text-align:center;font-size:15.5px;color:#444;">G</div><div class="t" style="left:561.10px;top:-5.37px;width:400px;text-align:center;font-size:15.5px;color:#444;">H</div><div class="t" style="left:665.10px;top:-5.37px;width:400px;text-align:center;font-size:15.5px;color:#444;">I</div><div class="t" style="left:769.10px;top:-5.37px;width:400px;text-align:center;font-size:15.5px;color:#444;">J</div><div class="t" style="left:873.10px;top:-5.37px;width:400px;text-align:center;font-size:15.5px;color:#444;">K</div><div class="t" style="left:977.10px;top:-5.37px;width:400px;text-align:center;font-size:15.5px;color:#444;">L</div><div class="t" style="left:1081.10px;top:-5.37px;width:400px;text-align:center;font-size:15.5px;color:#444;">M</div><div class="t" style="left:1185.10px;top:-5.37px;width:400px;text-align:center;font-size:15.5px;color:#444;">N</div><div class="t" style="left:1289.10px;top:-5.37px;width:400px;text-align:center;font-size:15.5px;color:#444;">O</div><div class="t" style="left:1393.10px;top:-5.37px;width:400px;text-align:center;font-size:15.5px;color:#444;">P</div><div class="t" style="left:1499.10px;top:-5.37px;width:400px;text-align:center;font-size:15.5px;color:#444;">Q</div><div class="t" style="left:1607.10px;top:-5.37px;width:400px;text-align:center;font-size:15.5px;color:#444;">R</div><div class="r" style="left:26px;top:25px;width:1816px;height:1px;background:#b1b1b1;"></div><div class="r" style="left:0px;top:25px;width:25px;height:1px;background:#d0d0d0;"></div><div class="r" style="left:50px;top:3px;width:1px;height:22px;background:#bdbdbd;"></div><div class="r" style="left:350px;top:3px;width:1px;height:22px;background:#bdbdbd;"></div><div class="r" style="left:50px;top:24px;width:301px;height:2px;background:#217346;"></div><svg style="position:absolute;left:0;top:0" width="26" height="25"><polygon points="22,7 22,22 7,22" fill="#dfdfdf"/></svg><div class="r" style="left:0px;top:26px;width:25px;height:826px;background:#fff;"></div><div class="r" style="left:0px;top:71px;width:25px;height:21px;background:#e1e1e1;"></div><div class="r" style="left:0px;top:51px;width:25px;height:1px;background:#dadada;"></div><div class="r" style="left:0px;top:71px;width:25px;height:1px;background:#dadada;"></div><div class="r" style="left:0px;top:91px;width:25px;height:1px;background:#dadada;"></div><div class="r" style="left:0px;top:111px;width:25px;height:1px;background:#dadada;"></div><div class="r" style="left:0px;top:131px;width:25px;height:1px;background:#dadada;"></div><div class="r" style="left:0px;top:151px;width:25px;height:1px;background:#dadada;"></div><div class="r" style="left:0px;top:171px;width:25px;height:1px;background:#dadada;"></div><div class="r" style="left:0px;top:191px;width:25px;height:1px;background:#dadada;"></div><div class="r" style="left:0px;top:203px;width:25px;height:1px;background:#dadada;"></div><div class="r" style="left:0px;top:226px;width:25px;height:1px;background:#dadada;"></div><div class="r" style="left:0px;top:246px;width:25px;height:1px;background:#dadada;"></div><div class="r" style="left:0px;top:266px;width:25px;height:1px;background:#dadada;"></div><div class="r" style="left:0px;top:286px;width:25px;height:1px;background:#dadada;"></div><div class="r" style="left:0px;top:306px;width:25px;height:1px;background:#dadada;"></div><div class="r" style="left:0px;top:326px;width:25px;height:1px;background:#dadada;"></div><div class="r" style="left:0px;top:346px;width:25px;height:1px;background:#dadada;"></div><div class="r" style="left:0px;top:366px;width:25px;height:1px;background:#dadada;"></div><div class="r" style="left:0px;top:386px;width:25px;height:1px;background:#dadada;"></div><div class="r" style="left:0px;top:406px;width:25px;height:1px;background:#dadada;"></div><div class="r" style="left:0px;top:426px;width:25px;height:1px;background:#dadada;"></div><div class="r" style="left:0px;top:446px;width:25px;height:1px;background:#dadada;"></div><div class="r" style="left:0px;top:466px;width:25px;height:1px;background:#dadada;"></div><div class="r" style="left:0px;top:489px;width:25px;height:1px;background:#dadada;"></div><div class="r" style="left:0px;top:509px;width:25px;height:1px;background:#dadada;"></div><div class="r" style="left:0px;top:529px;width:25px;height:1px;background:#dadada;"></div><div class="r" style="left:0px;top:549px;width:25px;height:1px;background:#dadada;"></div><div class="r" style="left:0px;top:569px;width:25px;height:1px;background:#dadada;"></div><div class="r" style="left:0px;top:589px;width:25px;height:1px;background:#dadada;"></div><div class="r" style="left:0px;top:609px;width:25px;height:1px;background:#dadada;"></div><div class="r" style="left:0px;top:629px;width:25px;height:1px;background:#dadada;"></div><div class="r" style="left:0px;top:649px;width:25px;height:1px;background:#dadada;"></div><div class="r" style="left:0px;top:669px;width:25px;height:1px;background:#dadada;"></div><div class="r" style="left:0px;top:689px;width:25px;height:1px;background:#dadada;"></div><div class="r" style="left:0px;top:709px;width:25px;height:1px;background:#dadada;"></div><div class="r" style="left:0px;top:729px;width:25px;height:1px;background:#dadada;"></div><div class="r" style="left:0px;top:749px;width:25px;height:1px;background:#dadada;"></div><div class="r" style="left:0px;top:769px;width:25px;height:1px;background:#dadada;"></div><div class="r" style="left:0px;top:789px;width:25px;height:1px;background:#dadada;"></div><div class="r" style="left:0px;top:809px;width:25px;height:1px;background:#dadada;"></div><div class="r" style="left:0px;top:829px;width:25px;height:1px;background:#dadada;"></div><div class="r" style="left:0px;top:849px;width:25px;height:1px;background:#dadada;"></div><div class="r" style="left:25px;top:25px;width:1px;height:827px;background:#a6a6a6;"></div><div class="r" style="left:24px;top:71px;width:2px;height:21px;background:#217346;"></div><div class="r" style="left:0px;top:71px;width:24px;height:1px;background:#c0c0c0;"></div><div class="r" style="left:0px;top:91px;width:24px;height:1px;background:#c0c0c0;"></div><div class="t" style="left:-191.50px;top:21.63px;width:400px;text-align:center;font-size:15.5px;color:#444;">1</div><div class="t" style="left:-191.50px;top:41.63px;width:400px;text-align:center;font-size:15.5px;color:#444;">2</div><div class="t" style="left:-191.50px;top:61.63px;width:400px;text-align:center;font-size:15.5px;font-weight:bold;color:#217346;">3</div><div class="t" style="left:-191.50px;top:81.63px;width:400px;text-align:center;font-size:15.5px;color:#444;">4</div><div class="t" style="left:-191.50px;top:101.63px;width:400px;text-align:center;font-size:15.5px;color:#444;">5</div><div class="t" style="left:-191.50px;top:121.63px;width:400px;text-align:center;font-size:15.5px;color:#444;">6</div><div class="t" style="left:-191.50px;top:141.63px;width:400px;text-align:center;font-size:15.5px;color:#444;">7</div><div class="t" style="left:-191.50px;top:161.63px;width:400px;text-align:center;font-size:15.5px;color:#444;">8</div><div class="t" style="left:-191.50px;top:173.80px;width:400px;text-align:center;font-size:15px;color:#444;clip-path:inset(18.20px 0 0 0);">9</div><div class="t" style="left:-191.50px;top:196.63px;width:400px;text-align:center;font-size:15.5px;color:#444;">10</div><div class="t" style="left:-191.50px;top:216.63px;width:400px;text-align:center;font-size:15.5px;color:#444;">11</div><div class="t" style="left:-191.50px;top:236.63px;width:400px;text-align:center;font-size:15.5px;color:#444;">12</div><div class="t" style="left:-191.50px;top:256.63px;width:400px;text-align:center;font-size:15.5px;color:#444;">13</div><div class="t" style="left:-191.50px;top:276.63px;width:400px;text-align:center;font-size:15.5px;color:#444;">14</div><div class="t" style="left:-191.50px;top:296.63px;width:400px;text-align:center;font-size:15.5px;color:#444;">15</div><div class="t" style="left:-191.50px;top:316.63px;width:400px;text-align:center;font-size:15.5px;color:#444;">16</div><div class="t" style="left:-191.50px;top:336.63px;width:400px;text-align:center;font-size:15.5px;color:#444;">17</div><div class="t" style="left:-191.50px;top:356.63px;width:400px;text-align:center;font-size:15.5px;color:#444;">43</div><div class="t" style="left:-191.50px;top:376.63px;width:400px;text-align:center;font-size:15.5px;color:#444;">44</div><div class="t" style="left:-191.50px;top:396.63px;width:400px;text-align:center;font-size:15.5px;color:#444;">45</div><div class="t" style="left:-191.50px;top:416.63px;width:400px;text-align:center;font-size:15.5px;color:#444;">46</div><div class="t" style="left:-191.50px;top:436.63px;width:400px;text-align:center;font-size:15.5px;color:#444;">47</div><div class="t" style="left:-191.50px;top:459.63px;width:400px;text-align:center;font-size:15.5px;color:#444;">48</div><div class="t" style="left:-191.50px;top:479.63px;width:400px;text-align:center;font-size:15.5px;color:#444;">49</div><div class="t" style="left:-191.50px;top:499.63px;width:400px;text-align:center;font-size:15.5px;color:#444;">50</div><div class="t" style="left:-191.50px;top:519.63px;width:400px;text-align:center;font-size:15.5px;color:#444;">51</div><div class="t" style="left:-191.50px;top:539.63px;width:400px;text-align:center;font-size:15.5px;color:#444;">52</div><div class="t" style="left:-191.50px;top:559.63px;width:400px;text-align:center;font-size:15.5px;color:#444;">53</div><div class="t" style="left:-191.50px;top:579.63px;width:400px;text-align:center;font-size:15.5px;color:#444;">54</div><div class="t" style="left:-191.50px;top:599.63px;width:400px;text-align:center;font-size:15.5px;color:#444;">55</div><div class="t" style="left:-191.50px;top:619.63px;width:400px;text-align:center;font-size:15.5px;color:#444;">56</div><div class="t" style="left:-191.50px;top:639.63px;width:400px;text-align:center;font-size:15.5px;color:#444;">57</div><div class="t" style="left:-191.50px;top:659.63px;width:400px;text-align:center;font-size:15.5px;color:#444;">58</div><div class="t" style="left:-191.50px;top:679.63px;width:400px;text-align:center;font-size:15.5px;color:#444;">59</div><div class="t" style="left:-191.50px;top:699.63px;width:400px;text-align:center;font-size:15.5px;color:#444;">60</div><div class="t" style="left:-191.50px;top:719.63px;width:400px;text-align:center;font-size:15.5px;color:#444;">61</div><div class="t" style="left:-191.50px;top:739.63px;width:400px;text-align:center;font-size:15.5px;color:#444;">62</div><div class="t" style="left:-191.50px;top:759.63px;width:400px;text-align:center;font-size:15.5px;color:#444;">63</div><div class="t" style="left:-191.50px;top:779.63px;width:400px;text-align:center;font-size:15.5px;color:#444;">64</div><div class="t" style="left:-191.50px;top:799.63px;width:400px;text-align:center;font-size:15.5px;color:#444;">65</div><div class="t" style="left:-191.50px;top:819.63px;width:400px;text-align:center;font-size:15.5px;color:#444;">66</div><div class="r" style="left:0px;top:191px;width:26px;height:1px;background:#9e9e9e;"></div><div class="r" style="left:0;top:852px;width:1842px;height:25px;background:#f5f5f5;border-top:1px solid #a0a0a0;box-sizing:border-box"></div><svg style="position:absolute;left:0;top:852px" width="60" height="25"><polygon points="5,10 10,14.5 5,19" fill="#217346"/><rect x="30" y="14" width="2" height="2" fill="#217346"/><rect x="35" y="14" width="2" height="2" fill="#217346"/><rect x="40" y="14" width="2" height="2" fill="#217346"/></svg><div class="r" style="left:51px;top:856px;width:1px;height:21px;background:#c6c6c6;"></div><div class="r" style="left:114px;top:856px;width:1px;height:21px;background:#c6c6c6;"></div><div class="r" style="left:231px;top:856px;width:1px;height:21px;background:#c6c6c6;"></div><div class="r" style="left:332px;top:856px;width:1px;height:21px;background:#c6c6c6;"></div><div class="r" style="left:432px;top:856px;width:1px;height:21px;background:#c6c6c6;"></div><div class="r" style="left:543px;top:856px;width:1px;height:21px;background:#c6c6c6;"></div><div class="r" style="left:733px;top:856px;width:1px;height:21px;background:#c6c6c6;"></div><div class="t" style="left:64.50px;top:843.28px;width:400px;text-align:left;font-size:16.5px;color:#444;letter-spacing:1.0px;">Intro</div><div class="t" style="left:128.50px;top:843.28px;width:400px;text-align:left;font-size:16.5px;color:#444;letter-spacing:0.5px;">Input Sheet</div><div class="t" style="left:245.00px;top:843.28px;width:400px;text-align:left;font-size:16.5px;color:#444;letter-spacing:0.17px;">Summary</div><div class="t" style="left:345.00px;top:843.28px;width:400px;text-align:left;font-size:16.5px;color:#444;letter-spacing:0.6px;">Valuation</div><div class="t" style="left:446.00px;top:843.28px;width:400px;text-align:left;font-size:16.5px;color:#444;letter-spacing:0.4px;">Dashboard</div><div class="t" style="left:559.00px;top:843.28px;width:400px;text-align:left;font-size:16.5px;color:#444;letter-spacing:0.2px;">Financial Statements</div><div class="t" style="left:751.00px;top:843.28px;width:400px;text-align:left;font-size:16.5px;color:#444;letter-spacing:0.48px;">Income Statement (Monthly)</div><div class="r" style="left:988px;top:852px;width:220px;height:25px;background:#fff;border-left:1px solid #a0a0a0;border-right:1px solid #a0a0a0;box-sizing:border-box"></div><div class="r" style="left:989px;top:875px;width:218px;height:2px;background:#217346;"></div><div class="t" style="left:1001.00px;top:843.28px;width:400px;text-align:left;font-size:16.5px;font-weight:bold;color:#217346;letter-spacing:0.14px;">Balance Sheet (Monthly)</div><div class="t" style="left:1226.00px;top:843.28px;width:400px;text-align:left;font-size:16.5px;color:#444;">Ca:</div><svg style="position:absolute;left:1250px;top:852px" width="90" height="25"><rect x="6" y="14" width="2" height="2" fill="#217346"/><rect x="11" y="14" width="2" height="2" fill="#217346"/><rect x="16" y="14" width="2" height="2" fill="#217346"/><circle cx="41" cy="14.5" r="9.3" fill="none" stroke="#666" stroke-width="1.3"/><path d="M35.5 14.5h11M41 9v11" stroke="#555" stroke-width="1.6"/><circle cx="70" cy="11" r="1" fill="#999"/><circle cx="70" cy="15" r="1" fill="#999"/><circle cx="70" cy="19" r="1" fill="#999"/></svg><div class="r" style="left:1337px;top:857px;width:505px;height:19px;background:#e8e8e8;"></div><div class="r" style="left:1337px;top:857px;width:19px;height:19px;background:#fff;border:1px solid #ababab;box-sizing:border-box"></div><div class="r" style="left:1356px;top:857px;width:60px;height:19px;background:#fff;border:1px solid #ababab;box-sizing:border-box"></div><div class="r" style="left:1822px;top:857px;width:19px;height:19px;background:#fff;border:1px solid #ababab;box-sizing:border-box"></div><svg style="position:absolute;left:1337px;top:857px" width="505" height="19"><polygon points="10,5 5,9.5 10,14" fill="#666"/><polygon points="492,5 497,9.5 492,14" fill="#666"/></svg>
</body></html>
